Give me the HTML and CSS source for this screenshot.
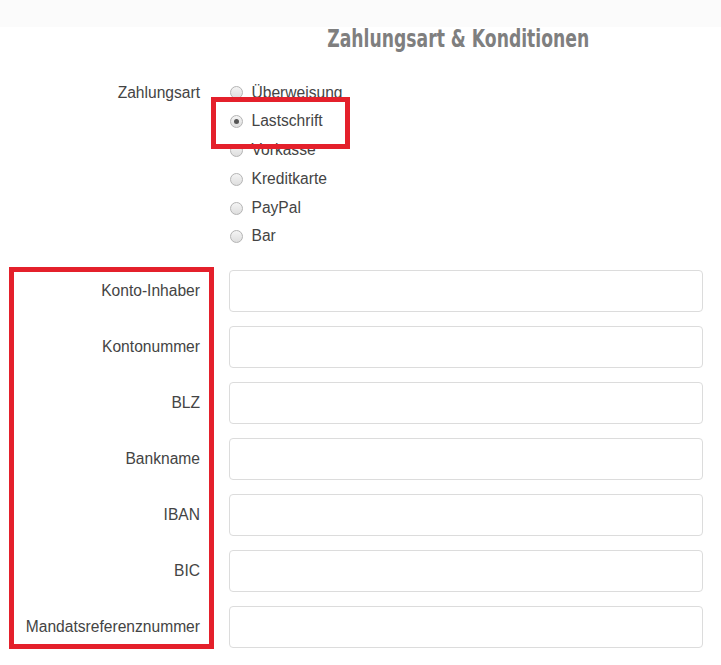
FILE: index.html
```html
<!DOCTYPE html>
<html lang="de">
<head>
<meta charset="utf-8">
<title>Zahlungsart &amp; Konditionen</title>
<link rel="stylesheet" href="styles.css">
</head>
<body>
<div class="topbar"></div>
<h1 class="title"><span class="title-text">Zahlungsart &amp; Konditionen</span></h1>
<form class="form">
  <div class="pay">
    <div class="lbl">Zahlungsart</div>
    <div class="options">
      <label class="opt"><input type="radio" name="pay" class="radio"><span>Überweisung</span></label>
      <label class="opt"><input type="radio" name="pay" class="radio" checked><span>Lastschrift</span></label>
      <label class="opt"><input type="radio" name="pay" class="radio"><span>Vorkasse</span></label>
      <label class="opt"><input type="radio" name="pay" class="radio"><span>Kreditkarte</span></label>
      <label class="opt"><input type="radio" name="pay" class="radio"><span>PayPal</span></label>
      <label class="opt"><input type="radio" name="pay" class="radio"><span>Bar</span></label>
    </div>
  </div>
  <div class="fields">
    <label class="flbl" for="f1">Konto-Inhaber</label><input id="f1" class="inp" type="text">
    <label class="flbl" for="f2">Kontonummer</label><input id="f2" class="inp" type="text">
    <label class="flbl" for="f3">BLZ</label><input id="f3" class="inp" type="text">
    <label class="flbl" for="f4">Bankname</label><input id="f4" class="inp" type="text">
    <label class="flbl" for="f5">IBAN</label><input id="f5" class="inp" type="text">
    <label class="flbl" for="f6">BIC</label><input id="f6" class="inp" type="text">
    <label class="flbl" for="f7">Mandatsreferenznummer</label><input id="f7" class="inp" type="text">
  </div>
</form>
<div class="mark mark-pay"></div>
<div class="mark mark-fields"></div>
</body>
</html>
```

FILE: styles.css
```css
* { box-sizing: border-box; }
html, body { margin: 0; padding: 0; background: #fff; }
body {
  position: relative;
  font-family: "Liberation Sans", Arial, sans-serif;
  font-size: 15.6px;
  color: #444;
  width: 721px;
  height: 665px;
  overflow: hidden;
}
.topbar {
  height: 27px;
  background: #fbfbfb;
}
.title {
  margin: 0;
  padding: 0 18px 0 214px;
  text-align: center;
  font-family: "DejaVu Sans Condensed", "Liberation Sans Narrow", sans-serif;
  font-weight: bold;
  font-size: 25px;
  line-height: 24px;
  color: #7f7f7f;
  white-space: nowrap;
}
.title-text {
  display: inline-block;
  transform: scaleX(0.765);
  transform-origin: center;
}
.form {
  margin-top: 27px;
}
.pay, .fields {
  display: grid;
  grid-template-columns: 200px 474px;
  column-gap: 29px;
}
.lbl {
  text-align: right;
  line-height: 28.8px;
  padding-top: 1px;
}
.options {
  display: flex;
  flex-direction: column;
}
.opt {
  display: flex;
  align-items: center;
  gap: 9px;
  height: 28.8px;
  line-height: 28.8px;
  padding-top: 1px;
}
.radio {
  -webkit-appearance: none;
  appearance: none;
  margin: 0 0 0 0.5px;
  width: 13px;
  height: 13px;
  border-radius: 50%;
  border: 1px solid #b4b4b4;
  background: linear-gradient(#f4f4f4, #dedede);
  position: relative;
  flex: none;
}
.radio:checked::after {
  content: "";
  position: absolute;
  left: 3px;
  top: 3px;
  width: 5px;
  height: 5px;
  border-radius: 50%;
  background: #555;
}
.fields {
  margin-top: 19px;
  grid-auto-rows: 42px;
  row-gap: 14px;
}
.flbl {
  align-self: center;
  text-align: right;
  line-height: 18px;
  padding-top: 1px;
}
.inp {
  height: 42px;
  margin: 0;
  border: 1px solid #dcdcdc;
  border-radius: 4px;
  background: #fff;
  font: inherit;
  padding: 0 10px;
}
.mark {
  position: absolute;
  border: 5px solid #e4202b;
  pointer-events: none;
}
.mark-pay {
  left: 211px;
  top: 97px;
  width: 139px;
  height: 52px;
}
.mark-fields {
  left: 9px;
  top: 267px;
  width: 205px;
  height: 382px;
}
```
